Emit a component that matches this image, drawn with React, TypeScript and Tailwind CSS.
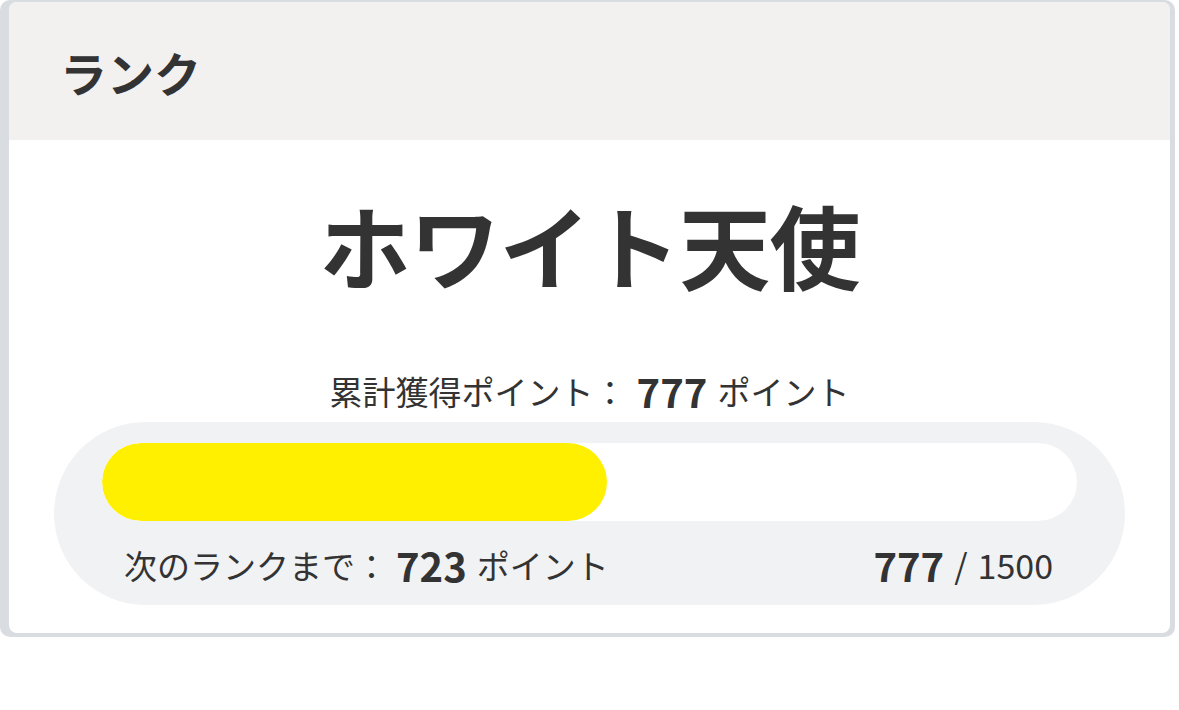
import React from 'react';

const current = 777;
const goal = 1500;

export default function App() {
  const pct = (current / goal) * 100;
  return (
    <div
      className="w-[1179px] h-[710px] bg-white text-[#333333]"
      style={{ fontFamily: '"Noto Sans CJK JP", "Noto Sans", sans-serif' }}
    >
      <div className="w-[1175px] bg-[#d9dde1] rounded-[10px] pl-[9px] pt-[2px] pr-[5px] pb-[4px]">
        <div className="bg-white rounded-[8px] overflow-hidden">
          <div className="h-[138px] bg-[#f2f1f0] flex items-center pl-[51px]">
            <h2 className="text-[47px] font-bold leading-none">ランク</h2>
          </div>
          <div className="flex flex-col items-center pt-[58px] pb-[28px] px-[45px]">
            <h1 className="text-[91px] font-bold leading-none tracking-[-1px]">ホワイト天使</h1>
            <p className="mt-[82px] h-[40px] flex items-center text-[33px] leading-none">
              累計獲得ポイント：
              <span className="text-[40px] font-bold mx-[10px]">777</span>
              ポイント
            </p>
            <div className="mt-[11px] w-full bg-[#f1f2f4] rounded-full px-[48px] pt-[21px] pb-[20px]">
              <div className="h-[78px] bg-white rounded-full overflow-hidden">
                <div className="h-full bg-[#fff000] rounded-full" style={{ width: `${pct}%` }} />
              </div>
              <div className="mt-[24px] h-[40px] flex items-center justify-between pl-[22px] pr-[24px]">
                <p className="flex items-center text-[33px] leading-none">
                  次のランクまで：
                  <span className="text-[40px] font-bold ml-[8px] mr-[10px]">{goal - current}</span>
                  ポイント
                </p>
                <p className="flex items-center text-[34px] leading-none">
                  <span className="text-[40px] font-bold">{current}</span>
                  <span className="mx-[10px]">/</span>
                  {goal}
                </p>
              </div>
            </div>
          </div>
        </div>
      </div>
    </div>
  );
}
